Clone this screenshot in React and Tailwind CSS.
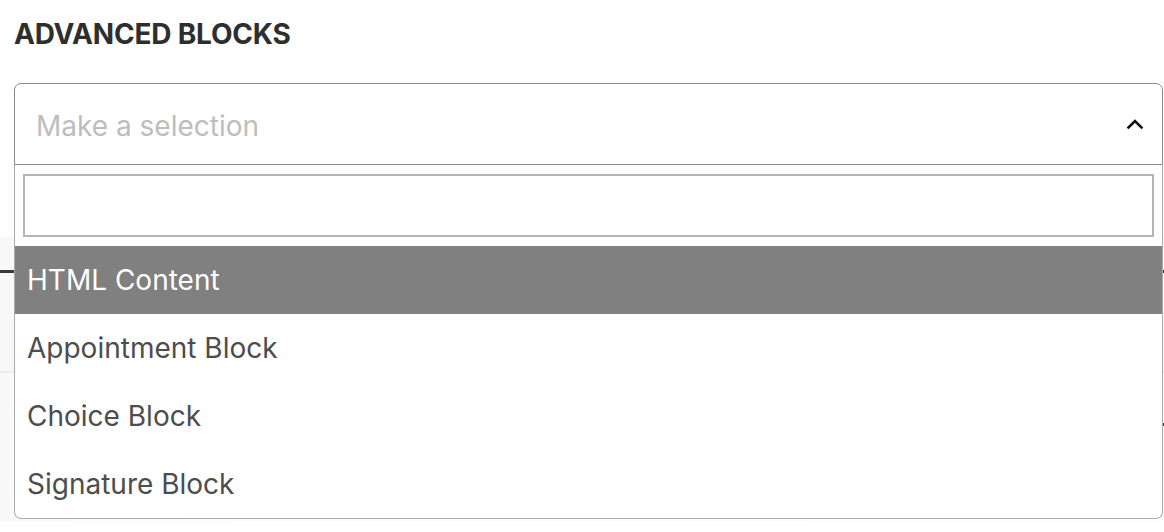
import React from "react";

const options = ["HTML Content", "Appointment Block", "Choice Block", "Signature Block"];

function ChevronUp() {
  return (
    <svg width="18" height="12" viewBox="0 0 18 12" fill="none" className="block">
      <path d="M2.5 9.5 L9 3 L15.5 9.5" stroke="#111" strokeWidth="2.6" strokeLinecap="square" />
    </svg>
  );
}

export default function App() {
  const active = 0;

  return (
    <div className="relative h-[532px] w-full overflow-hidden bg-white font-['Inter',sans-serif]">
      <div className="px-[14px] pt-[17px]">
        <h2 className="text-[28px] leading-[34px] font-bold tracking-[-0.2px] text-[#2e2e2e]">ADVANCED BLOCKS</h2>
      </div>

      <div className="relative z-10 ml-[14px] mr-[1px] mt-[32px]">
        {/* trigger */}
        <div className="flex h-[82px] items-center justify-between rounded-t-[7px] border border-[#8a8a8a] pl-[21px] pr-[18px]">
          <span className="pt-[4px] text-[28px] text-[#bdbdbd]">Make a selection</span>
          <ChevronUp />
        </div>

        {/* open list */}
        <div className="absolute left-0 right-0 top-full rounded-b-[7px] border-x-[1.5px] border-b-[1.5px] border-[#ababab] bg-white">
          <div className="px-[8px] pt-[9px] pb-[9px]">
            <input
              type="text"
              className="block h-[63px] w-full border-2 border-[#b4b4b4] bg-white px-3 text-[28px] outline-none"
            />
          </div>
          <ul>
            {options.map((o, i) => (
              <li
                key={o}
                className={`flex h-[68px] items-center px-[12px] text-[28px] ${
                  i === active ? "bg-[#808080] text-white" : "text-[#4d4d4d]"
                }`}
              >
                {o}
              </li>
            ))}
          </ul>
        </div>
      </div>

      {/* page content behind the dropdown */}
      <div className="mt-[72px] h-[136px] border-b-2 border-[#ececec] bg-[#f8f8f8] pt-[33px]">
        <div className="flex justify-between">
          <div className="h-[3px] w-[14px] bg-[#3a3a3a]" />
          <div className="h-[3px] w-[2px] bg-[#3a3a3a]" />
        </div>
      </div>
      <div className="h-[148px] bg-gradient-to-r from-[#f9f9f9] to-[#fdfdfd] pt-[50px]">
        <div className="flex justify-end">
          <div className="h-[3px] w-[2px] bg-[#3a3a3a]" />
        </div>
      </div>
    </div>
  );
}
